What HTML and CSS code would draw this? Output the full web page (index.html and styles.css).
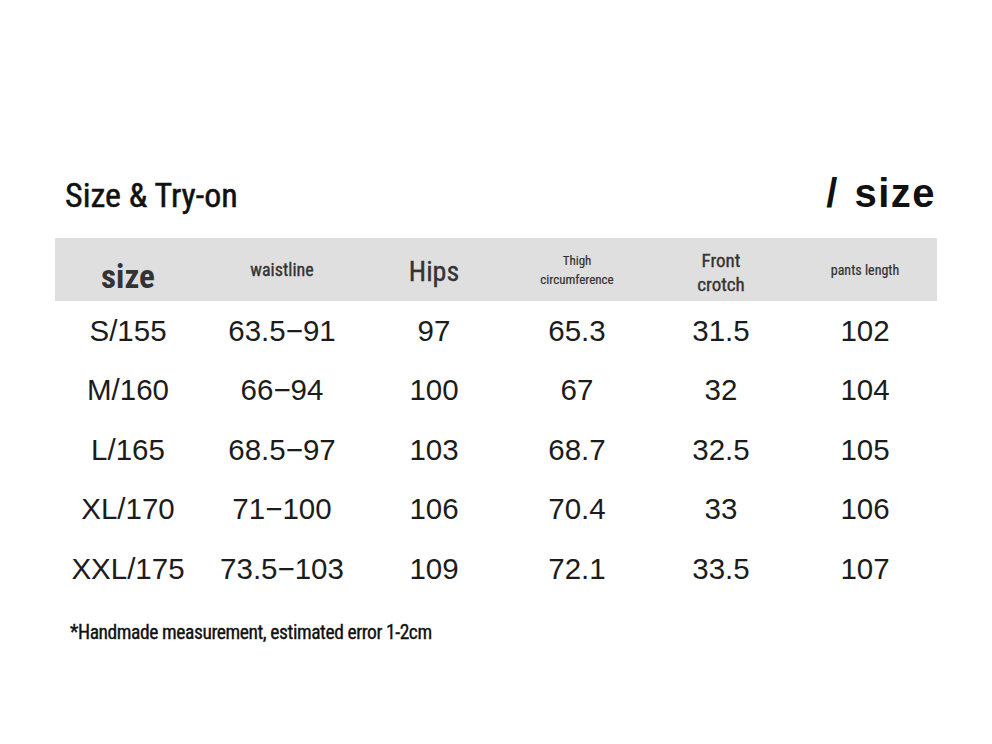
FILE: index.html
```html
<!DOCTYPE html>
<html lang="en">
<head>
<meta charset="utf-8">
<title>Size &amp; Try-on</title>
<link rel="stylesheet" href="styles.css">
</head>
<body>
<div class="page">
  <div class="title-row">
    <h1 class="title">Size &amp; Try-on</h1>
    <div class="tag">/ size</div>
  </div>
  <div class="chart">
    <div class="head">
      <div class="hc h-size">size</div>
      <div class="hc h-waist">waistline</div>
      <div class="hc h-hips">Hips</div>
      <div class="hc h-thigh">Thigh<br>circumference</div>
      <div class="hc h-front">Front<br>crotch</div>
      <div class="hc h-pants">pants length</div>
    </div>
    <div class="row"><div>S/155</div><div>63.5−91</div><div>97</div><div>65.3</div><div>31.5</div><div>102</div></div>
    <div class="row"><div>M/160</div><div>66−94</div><div>100</div><div>67</div><div>32</div><div>104</div></div>
    <div class="row"><div>L/165</div><div>68.5−97</div><div>103</div><div>68.7</div><div>32.5</div><div>105</div></div>
    <div class="row"><div>XL/170</div><div>71−100</div><div>106</div><div>70.4</div><div>33</div><div>106</div></div>
    <div class="row"><div>XXL/175</div><div>73.5−103</div><div>109</div><div>72.1</div><div>33.5</div><div>107</div></div>
  </div>
  <p class="note">*Handmade measurement, estimated error 1-2cm</p>
</div>
</body>
</html>
```
FILE: styles.css
```css
html, body {
  margin: 0;
  padding: 0;
  background: #ffffff;
}
.page {
  width: 882px;
  padding: 162px 0 0 55px;
}
.title-row {
  display: flex;
  justify-content: space-between;
  align-items: center;
  height: 66px;
  padding: 0 1px 10px 10px;
}
.title, .hc, .note {
  font-family: "Roboto Condensed", "Liberation Sans Narrow", "DejaVu Sans Condensed", "Open Sans", sans-serif;
  font-stretch: condensed;
}
.title {
  margin: 0;
  font-size: 34px;
  font-weight: 400;
  -webkit-text-stroke: 0.5px #111;
  color: #111;
}
.tag {
  font-family: "Liberation Sans", Arial, sans-serif;
  font-weight: bold;
  font-size: 40px;
  letter-spacing: 1.5px;
  word-spacing: 3px;
  color: #111;
  padding-bottom: 3px;
}
.head, .row {
  display: grid;
  grid-template-columns: 146px 162px 142px 144px 144px 144px;
  align-items: center;
  text-align: center;
}
.head {
  background: #dfdfdf;
  height: 63px;
  color: #333;
}
.hc {
  line-height: 1.2;
  -webkit-text-stroke: 0.35px #333;
}
.h-size { font-size: 33px; font-weight: bold; padding-top: 14px; -webkit-text-stroke: 0; }
.h-waist { font-size: 18px; font-weight: 400; }
.h-hips { font-size: 28px; font-weight: 400; padding-top: 4px; }
.h-thigh { font-size: 13px; line-height: 19px; -webkit-text-stroke: 0.2px #333; }
.h-front { font-size: 19px; font-weight: 400; line-height: 24px; padding-top: 6px; }
.h-pants { font-size: 14px; padding-top: 1px; -webkit-text-stroke: 0.2px #333; }
.row {
  height: 59.5px;
  font-family: "Liberation Sans", Arial, sans-serif;
  font-size: 29.5px;
  color: #1c1c1c;
}
.note {
  margin: 22px 0 0 15px;
  font-size: 19.5px;
  font-weight: 400;
  letter-spacing: -0.42px;
  -webkit-text-stroke: 0.35px #111;
  color: #111;
}
```
